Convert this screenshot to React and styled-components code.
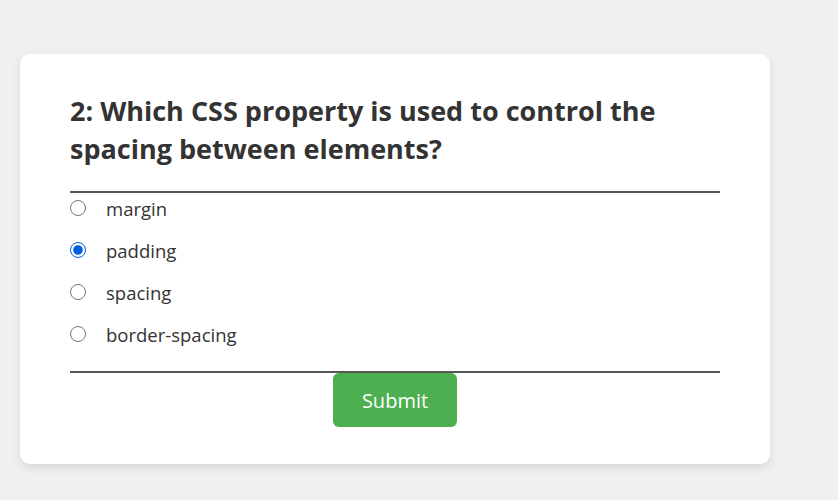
import { useState } from 'react';
import styled, { createGlobalStyle } from 'styled-components';

const GlobalStyle = createGlobalStyle`
  body {
    margin: 0;
    background: #f0f0f0;
    font-family: "Open Sans", "Noto Sans", sans-serif;
    color: #333;
  }
`;

const Page = styled.div`
  padding: 54px 68px 36px 20px;
`;

const Card = styled.div`
  background: #fff;
  border-radius: 10px;
  box-shadow: 0 4px 10px rgba(0, 0, 0, 0.1);
  padding: 38px 50px 37px;
`;

const Question = styled.h2`
  margin: 0 0 23px;
  font-size: 27px;
  line-height: 38px;
  font-weight: 700;
  color: #333;
`;

const Rule = styled.div`
  height: 2px;
  background: #555;
`;

const Options = styled.div`
  display: flex;
  flex-direction: column;
  gap: 12px;
  padding: 0 0 22px;
`;

const Option = styled.label`
  display: flex;
  align-items: center;
  gap: 20px;
  height: 30px;
  font-size: 18.5px;
  color: #333;
`;

const Radio = styled.input`
  width: 16px;
  height: 16px;
  margin: 0;
  accent-color: #0060df;
`;

const Footer = styled.div`
  display: flex;
  justify-content: center;
`;

const SubmitButton = styled.button`
  width: 124px;
  height: 54px;
  border: none;
  border-radius: 6px;
  background: #4caf50;
  color: #fff;
  font-family: inherit;
  font-size: 20px;
`;

const options = ['margin', 'padding', 'spacing', 'border-spacing'];

const App = () => {
  const [picked, setPicked] = useState('padding');

  return (
    <Page>
      <GlobalStyle />
      <Card>
        <Question>2: Which CSS property is used to control the spacing between elements?</Question>
        <Rule />
        <Options>
          {options.map((o) => (
            <Option key={o}>
              <Radio
                type="radio"
                name="answer"
                value={o}
                checked={picked === o}
                onChange={() => setPicked(o)}
              />
              {o}
            </Option>
          ))}
        </Options>
        <Rule />
        <Footer>
          <SubmitButton>Submit</SubmitButton>
        </Footer>
      </Card>
    </Page>
  );
};

export default App;
